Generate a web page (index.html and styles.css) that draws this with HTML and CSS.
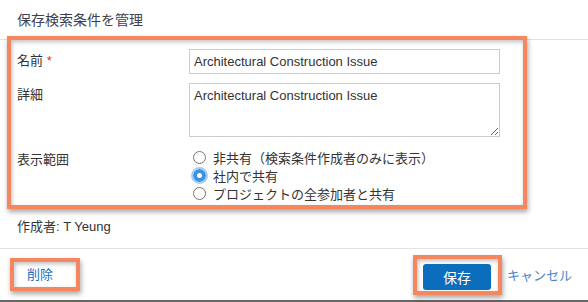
FILE: index.html
```html
<!DOCTYPE html>
<html lang="ja">
<head>
    <meta charset="UTF-8">
    <meta name="viewport" content="width=device-width, initial-scale=1.0">
    <title>保存検索条件を管理</title>
    <link rel="stylesheet" href="styles.css">
</head>
<body>

    <div class="dialog">
        <div class="dialog-header">保存検索条件を管理</div>

        <form class="dialog-form marked">
            <label class="field-label" for="name">名前 <span class="req">*</span></label>
            <input type="text" id="name" class="field-input" value="Architectural Construction Issue">

            <label class="field-label" for="detail">詳細</label>
            <textarea id="detail" class="field-input field-area">Architectural Construction Issue</textarea>

            <span class="field-label scope-label">表示範囲</span>
            <div class="radio-group">
                <label class="radio-row"><input type="radio" name="scope"> 非共有（検索条件作成者のみに表示）</label>
                <label class="radio-row"><input type="radio" name="scope" class="focused" checked> 社内で共有</label>
                <label class="radio-row"><input type="radio" name="scope"> プロジェクトの全参加者と共有</label>
            </div>
        </form>

        <div class="author">作成者: T Yeung</div>

        <div class="dialog-footer">
            <span class="marked delete-box"><a href="#" class="link">削除</a></span>
            <div class="footer-right">
                <span class="marked save-box"><button type="button" class="btn-save">保存</button></span>
                <a href="#" class="link cancel">キャンセル</a>
            </div>
        </div>
    </div>

</body>
</html>
```

FILE: styles.css
```css
/* Base */
body {
    margin: 0;
    font-family: "Liberation Sans", Arial, "Noto Sans CJK JP", sans-serif;
    font-size: 13px;
    color: #333;
    background: #fff;
}

.dialog {
    width: 588px;
    height: 300px;
    border-bottom: 2px solid #666;
    display: flex;
    flex-direction: column;
}

.dialog-header {
    height: 39px;
    line-height: 40px;
    padding-left: 17px;
    font-size: 14px;
    color: #3d4251;
    border-bottom: 1px solid #e3e3e3;
}

/* Annotation box (orange highlight) */
.marked {
    border: 4px solid #f4875f;
    box-shadow: 1px 3px 5px rgba(0, 0, 0, 0.35), inset 1px 2px 4px rgba(0, 0, 0, 0.25);
}

/* Form */
.dialog-form {
    margin: -4px 0 0 7px;
    width: 506px;
    height: 156px;
    padding: 9px 0 0 6px;
    display: grid;
    grid-template-columns: 172px 311px;
    grid-template-rows: 25px 54px 54px;
    row-gap: 9px;
    position: relative;
}

.scope-label,
.radio-group {
    margin-top: 2px;
}

.field-label {
    padding-top: 4px;
    line-height: 16px;
}

.req {
    color: #e0302a;
}

.field-input {
    box-sizing: border-box;
    width: 311px;
    height: 25px;
    border: 1px solid #ccc;
    padding: 0 4px;
    font-family: inherit;
    font-size: 13px;
    color: #333;
    margin: 0;
}

.field-area {
    height: 54px;
    padding: 4px;
    line-height: 16px;
}

.radio-group {
    display: flex;
    flex-direction: column;
}

.radio-row {
    height: 18px;
    display: flex;
    align-items: center;
    gap: 7px;
    padding-left: 4px;
    font-family: "Noto Sans CJK JP", sans-serif;
    font-size: 13px;
}

.radio-row input {
    appearance: none;
    margin: 0;
    width: 13px;
    height: 13px;
    box-sizing: border-box;
    border: 1px solid #777;
    border-radius: 50%;
    background: #fff;
}

.radio-row input:checked {
    border: 4px solid #3d8fe2;
}

.radio-row input.focused {
    outline: 2px solid #a8cbf5;
    outline-offset: 0;
}

/* Author */
.author {
    height: 30px;
    padding: 9px 0 0 17px;
    line-height: 18px;
    border-bottom: 1px solid #e3e3e3;
}

/* Footer */
.dialog-footer {
    flex: 1;
    display: flex;
    justify-content: space-between;
    align-items: center;
    padding: 0 16px 0 10px;
}

.link {
    color: #1a6fc0;
    text-decoration: none;
}

.delete-box {
    width: 49px;
    height: 25px;
    padding-left: 13px;
    line-height: 25px;
}

.footer-right {
    display: flex;
    align-items: center;
    gap: 5px;
}

.save-box {
    padding: 5px 7px 1px 6px;
    height: 26px;
}

.btn-save {
    width: 68px;
    height: 26px;
    border: none;
    border-radius: 3px;
    background: #0a6ebd;
    color: #fff;
    font-family: "Noto Sans CJK JP", sans-serif;
    font-size: 14px;
    padding: 0;
}

.cancel {
    color: #4a86c8;
}
```
